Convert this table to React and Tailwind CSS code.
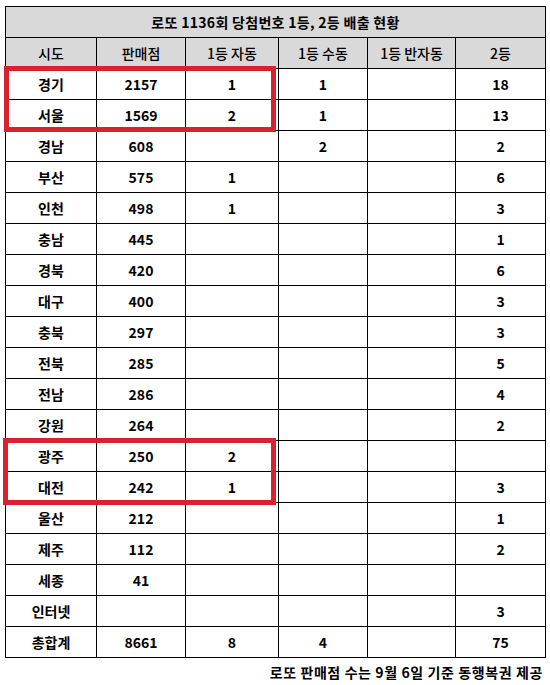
import React from "react";

const rows = [
  ["경기", "2157", "1", "1", "", "18"],
  ["서울", "1569", "2", "1", "", "13"],
  ["경남", "608", "", "2", "", "2"],
  ["부산", "575", "1", "", "", "6"],
  ["인천", "498", "1", "", "", "3"],
  ["충남", "445", "", "", "", "1"],
  ["경북", "420", "", "", "", "6"],
  ["대구", "400", "", "", "", "3"],
  ["충북", "297", "", "", "", "3"],
  ["전북", "285", "", "", "", "5"],
  ["전남", "286", "", "", "", "4"],
  ["강원", "264", "", "", "", "2"],
  ["광주", "250", "2", "", "", ""],
  ["대전", "242", "1", "", "", "3"],
  ["울산", "212", "", "", "", "1"],
  ["제주", "112", "", "", "", "2"],
  ["세종", "41", "", "", "", ""],
  ["인터넷", "", "", "", "", "3"],
  ["총합계", "8661", "8", "4", "", "75"],
];

const headers = ["시도", "판매점", "1등 자동", "1등 수동", "1등 반자동", "2등"];
const widths = ["w-[91px]", "w-[89px]", "w-[93px]", "w-[89px]", "w-[88px]", "w-[90px]"];

export default function App() {
  return (
    <div
      className="relative w-[550px] h-[685px] bg-white text-black"
      style={{ fontFamily: '"Noto Sans CJK KR", "Noto Sans", sans-serif' }}
    >
      <div className="pt-[6px] pl-[5px]">
        <table className="table-fixed border-collapse w-[540px] text-[14px] text-center">
          <colgroup>
            {widths.map((w, i) => (
              <col key={i} className={w} />
            ))}
          </colgroup>
          <thead>
            <tr className="h-[31px] bg-[#d9d9d9]">
              <th colSpan={6} className="border border-black font-semibold tracking-[0.3px] p-0 leading-none">
                로또 1136회 당첨번호 1등, 2등 배출 현황
              </th>
            </tr>
            <tr className="h-[31px] bg-[#d9d9d9]">
              {headers.map((h) => (
                <th key={h} className="border border-black font-medium p-0 leading-none">
                  {h}
                </th>
              ))}
            </tr>
          </thead>
          <tbody>
            {rows.map((r) => (
              <tr key={r[0]} className="h-[31px]">
                {r.map((c, i) => (
                  <td key={i} className="border border-black font-bold p-0 leading-none">
                    {c}
                  </td>
                ))}
              </tr>
            ))}
          </tbody>
        </table>
        <div className="pr-[7px] pt-[7px] text-right text-[14px] font-bold tracking-[0.6px] leading-none">
          로또 판매점 수는 9월 6일 기준 동행복권 제공
        </div>
      </div>

      {/* highlight boxes */}
      <div className="absolute left-[4px] top-[66px] w-[272px] h-[66px] border-[5px] border-[#d8232f]" />
      <div className="absolute left-[3px] top-[438px] w-[273px] h-[67px] border-[5px] border-[#d8232f]" />
    </div>
  );
}
